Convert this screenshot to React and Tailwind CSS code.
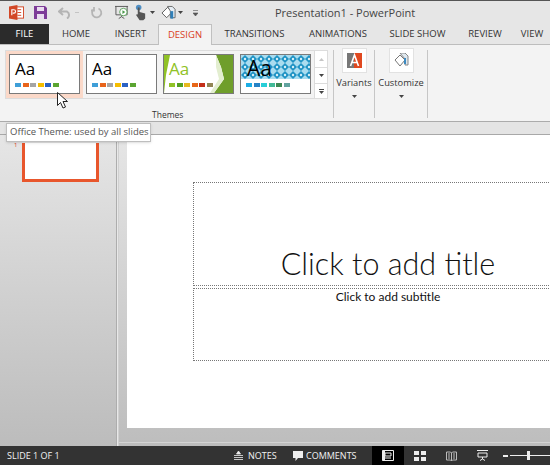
import { Fragment } from 'react';

const TABS = [
    { label: 'HOME', w: 'w-[54px]' },
    { label: 'INSERT', w: 'w-[55px]' },
    { label: 'DESIGN', w: 'w-[54px]', active: true },
    { label: 'TRANSITIONS', w: 'w-[85px]' },
    { label: 'ANIMATIONS', w: 'w-[82px]' },
    { label: 'SLIDE SHOW', w: 'w-[77px]' },
    { label: 'REVIEW', w: 'w-[58px]' },
    { label: 'VIEW', w: 'w-[36px]' },
];

const OFFICE = ['#3f9fd8', '#e8641b', '#a5a5a5', '#f5bd00', '#2b62c4', '#5ba532'];
const GREEN = ['#90c226', '#54a021', '#e6b91e', '#e76618', '#c42f1a', '#918655'];
const BLUE = ['#1cade4', '#2683c6', '#27ced7', '#42ba97', '#3e8853', '#62a39f'];

const Swatches = ({ colors }) => (
    <div className="flex gap-[1.5px]">
        {colors.map((c, i) => (
            <div key={i} className="w-[6px] h-[4px]" style={{ backgroundColor: c }} />
        ))}
    </div>
);

const Caret = ({ className }) => (
    <svg width="5" height="3" viewBox="0 0 5 3" className={className}>
        <path d="M0 0h5L2.500 3z" fill="#444" />
    </svg>
);

const ThemeCard = ({ colors, art, aa = 'left-[5px] top-[3px] text-[17px] text-black', selected }) => (
    <div className={`w-[77px] h-[47px] p-[3px] ${selected ? 'bg-[#fbd9c9]' : ''}`}>
        <div className="relative w-[71px] h-[40px] border border-[#7a7a7a] bg-white overflow-hidden">
            {art}
            <div className={`absolute leading-[22px] font-['Open_Sans',sans-serif] ${aa}`}>Aa</div>
            <div className="absolute left-[5px] top-[28px]">
                <Swatches colors={colors} />
            </div>
        </div>
    </div>
);

const GreenArt = () => (
    <svg width="69" height="38" viewBox="0 0 69 38" className="absolute left-0 top-0">
        <path d="M0 0h6L2 20 0 38z" fill="#90c226" />
        <path d="M52 0h17v38H50l10-14-3-12z" fill="#6f9e2b" />
        <path d="M52 0l5 12 3 12-10 14h-4l9-14-3-12z" fill="#e3eed0" />
    </svg>
);

const BlueArt = () => (
    <svg width="69" height="24" viewBox="0 0 69 24" className="absolute left-0 top-0">
        <defs>
            <pattern id="dots" width="8" height="8" patternUnits="userSpaceOnUse">
                <rect width="8" height="8" fill="#a9dcef" />
                <path d="M4 0L8 4 4 8 0 4z" fill="#1f93c4" />
                <circle cx="4" cy="4" r="1.200" fill="#d8f0f8" />
            </pattern>
        </defs>
        <rect width="69" height="24" fill="url(#dots)" />
    </svg>
);

const PowerPointLogo = () => (
    <svg width="15" height="15" viewBox="0 0 16 16">
        <rect x="7" y="2" width="8.500" height="12" fill="#fff" stroke="#d24726" />
        <path d="M9 5h4M9 8h4M9 11h4" stroke="#d24726" />
        <path d="M0 1.500L9 0v16L0 14.500z" fill="#d24726" />
        <path d="M3 11V5h2.200a1.700 1.700 0 010 3.600H4" fill="none" stroke="#fff" strokeWidth="1.200" />
    </svg>
);

const QuickAccess = () => (
    <div className="flex items-center h-full pl-[9px]">
        <PowerPointLogo />
        <svg width="13" height="13" viewBox="0 0 13 13" className="ml-[10px]">
            <path d="M0 0h11l2 2v11H0z" fill="#7d3c98" />
            <rect x="3" y="1" width="7" height="4" fill="#e9dcef" />
            <rect x="3" y="8" width="7" height="5" fill="#e9dcef" />
        </svg>
        <svg width="14" height="12" viewBox="0 0 14 12" className="ml-[11px]">
            <path d="M5 1L1 4.500 5 8M1 4.500h8a4 4 0 010 7" fill="none" stroke="#b4b4b4" strokeWidth="2" />
        </svg>
        <div className="ml-[3px] w-[4px] h-[1px] bg-[#c4c4c4]" />
        <svg width="12" height="12" viewBox="0 0 12 12" className="ml-[12px]">
            <path d="M7.500 1.500a4.600 4.600 0 11-4.500.5M3 0v3.500H0" fill="none" stroke="#b5b5b5" strokeWidth="1.800" />
        </svg>
        <svg width="14" height="15" viewBox="0 0 15 15" className="ml-[12px]">
            <path d="M0 1h14M1 1v9h12V1M7 10v2M4 14l3-2 3 2" fill="none" stroke="#555" />
            <circle cx="9" cy="7" r="4" fill="#fff" stroke="#5aa05a" />
            <path d="M8 5l3 2-3 2z" fill="#4a9a4a" />
        </svg>
        <svg width="12" height="17" viewBox="0 0 13 17" className="ml-[6px]">
            <circle cx="4" cy="3" r="3" fill="#4f8fc4" />
            <path d="M3 3h2v5l6 1.500V15l-2 2H5L1 11l2-.5z" fill="#555" />
        </svg>
        <Caret className="ml-[3px]" />
        <svg width="15" height="16" viewBox="0 0 16 16" className="ml-[6px]">
            <path d="M1 8l6-6 5 5-6 6z" fill="#fff" stroke="#555" />
            <path d="M7 1h5l3 3v9H10V6z" fill="#e6eef5" stroke="#666" />
            <rect x="10" y="6" width="3" height="8" fill="#2f7fb8" />
        </svg>
        <Caret className="ml-[2px]" />
        <svg width="5" height="6" viewBox="0 0 5 6" className="ml-[10px]">
            <path d="M0 .5h5M0 3h5L2.500 6z" fill="#555" stroke="#555" strokeWidth=".6" />
        </svg>
    </div>
);

const RibbonButton = ({ label, children, w }) => (
    <div className={`flex flex-col items-center ${w} text-[9.3px] leading-[14px] text-[#333]`}>
        <div className="w-[25px] h-[25px] mt-[3px] bg-white border border-[#e2e2e2] flex items-center justify-center">{children}</div>
        <div className="mt-[3px]">{label}</div>
        <Caret className="mt-[5px]" />
    </div>
);

const Separator = () => <div className="w-[1px] h-[68px] mt-[5px] bg-[#c6c6c6]" />;

const Ribbon = () => (
    <div className="h-[77px] bg-[#f3f3f3] border-b border-[#ababab] flex shrink-0">
        <div className="relative w-[333px] pl-[5px] pt-[5px]">
            <div className="flex border border-[#dcdcdc] w-[323px] h-[49px]">
                <ThemeCard selected colors={OFFICE} />
                <ThemeCard colors={OFFICE} />
                <ThemeCard colors={GREEN} art={<GreenArt />} aa="left-[5px] top-[3px] text-[17px] text-[#90c226]" />
                <ThemeCard colors={BLUE} art={<BlueArt />} aa="left-[6px] top-[2px] text-[21px] text-black" />
                <div className="ml-auto w-[13px] flex flex-col border-l border-[#dcdcdc] bg-white">
                    <div className="h-[17px] flex items-center justify-center border-b border-[#dcdcdc]">
                        <Caret className="rotate-180 opacity-30" />
                    </div>
                    <div className="h-[16px] flex items-center justify-center border-b border-[#dcdcdc]">
                        <Caret />
                    </div>
                    <div className="flex-1 flex flex-col gap-[1px] items-center justify-center">
                        <div className="w-[5px] h-[1px] bg-[#444]" />
                        <Caret />
                    </div>
                </div>
            </div>
            <div className="absolute left-[152px] top-[63px] text-[8.5px] leading-[14px] font-medium text-[#333]">Themes</div>
        </div>
        <Separator />
        <RibbonButton label="Variants" w="w-[40px]">
            <svg width="15" height="15" viewBox="0 0 15 15">
                <rect width="15" height="15" fill="#777" />
                <rect x="7" width="8" height="15" fill="#e0481f" />
                <path d="M3.500 13L7.500 2l4 11M5 9.500h5" fill="none" stroke="#fff" strokeWidth="1.600" />
            </svg>
        </RibbonButton>
        <Separator />
        <RibbonButton label="Customize" w="w-[52px]">
            <svg width="15" height="15" viewBox="0 0 15 15">
                <path d="M1 7l5-5 5 5-5 6z" fill="#fff" stroke="#777" />
                <path d="M6 0h5l3 3v9h-3V6z" fill="#dfe8ef" stroke="#888" />
                <rect x="10" y="5" width="2" height="6" fill="#3d8bc2" />
            </svg>
        </RibbonButton>
        <Separator />
    </div>
);

const StatusBar = () => (
    <div className="h-[19px] shrink-0 bg-[#333333] flex items-center text-[9px] text-[#f2f2f2] overflow-hidden [&>*]:shrink-0">
        <div className="ml-[7px] w-[227px]">SLIDE 1 OF 1</div>
        <svg width="9" height="9" viewBox="0 0 9 9">
            <path d="M2.500 3L4.500 0l2 3zM0 4.500h9M0 6.500h9M0 8.500h9" fill="#eee" stroke="#eee" strokeWidth=".8" />
        </svg>
        <div className="ml-[5px] w-[45px] text-[9px]">NOTES</div>
        <svg width="10" height="10" viewBox="0 0 10 10">
            <path d="M0 0h10v7H5L2.500 10V7H0z" fill="#eee" />
        </svg>
        <div className="ml-[3px] w-[66px] text-[9px]">COMMENTS</div>
        <div className="w-[32px] h-[19px] bg-black flex items-center justify-center">
            <svg width="12" height="11" viewBox="0 0 12 11">
                <path d="M.5.500h11v10H.500zM3 3h6v3H3zM3 8h6" fill="none" stroke="#eee" />
                <rect x=".5" y=".5" width="2.500" height="10" fill="#eee" />
            </svg>
        </div>
        <svg width="12" height="10" viewBox="0 0 12 10" className="ml-[10px]">
            <path d="M0 0h5v4H0zM7 0h5v4H7zM0 6h5v4H0zM7 6h5v4H7z" fill="#eee" />
        </svg>
        <svg width="11" height="10" viewBox="0 0 11 10" className="ml-[20px]">
            <path d="M.5 1h4l1 1 1-1h4v8h-4l-1 1-1-1h-4zM5.500 2v8M2 3h2M2 5h2M2 7h2M7 3h2M7 5h2M7 7h2" fill="none" stroke="#bbb" />
        </svg>
        <svg width="11" height="11" viewBox="0 0 11 11" className="ml-[20px]">
            <path d="M0 .5h11M1 3h9v4H1zM5.500 7v2M3 10.500l2.500-1.500L8 10.500" fill="none" stroke="#eee" />
        </svg>
        <div className="ml-[15px] w-[5px] h-[2px] bg-[#eee]" />
        <div className="relative ml-[2px] w-[45px] h-[1px] bg-[#eee]">
            <div className="absolute left-[17px] -top-[4px] w-[3px] h-[9px] bg-[#eee]" />
        </div>
    </div>
);

const App = () => {
    return (
        <div className="relative w-[550px] h-[465px] overflow-hidden flex flex-col bg-[#e8e8e8] font-['Open_Sans',sans-serif]">
            {/* title bar */}
            <div className="relative h-[24px] shrink-0 border-t border-[#555] bg-[#e6e6e6]">
                <QuickAccess />
                <div className="absolute left-[275px] top-[4px] text-[11px] leading-[16px] text-[#444]">Presentation1 - PowerPoint</div>
            </div>

            {/* tabs */}
            <div className="h-[21px] shrink-0 flex bg-[#e6e6e6] border-b border-[#bdbdbd] text-[9.5px] text-[#333]">
                <div className="w-[49px] bg-[#2b2b2b] text-white flex items-center justify-center">FILE</div>
                {TABS.map((tab) => (
                    <Fragment key={tab.label}>
                        {tab.active ? (
                            <div className={`${tab.w} h-[21px] z-10 bg-[#f3f3f3] border border-b-0 border-[#c0c0c0] text-[#d9401e] flex items-center justify-center`}>{tab.label}</div>
                        ) : (
                            <div className={`${tab.w} flex items-center justify-center`}>{tab.label}</div>
                        )}
                    </Fragment>
                ))}
            </div>

            <Ribbon />

            <div className="h-[13px] shrink-0 bg-[#e4e4e4] border-b border-[#a8a8a8]" />

            {/* main area */}
            <div className="flex-1 flex min-h-0">
                {/* thumbnails */}
                <div className="w-[117px] border-r border-[#adadad] bg-linear-to-b from-[#e6e6e6] to-[#bcbcbc] pl-[22px] pt-[8px]">
                    <div className="w-[77px] h-[39px] bg-white border-[3px] border-t-0 border-[#e8562c]" />
                </div>
                <div className="flex-1 ml-[1px] border-l border-[#d0d0d0] bg-linear-to-b from-[#e6e6e6] to-[#bdbdbd] pb-[3px] min-w-0 flex flex-col">
                    <div className="flex-1 min-h-0 border-b border-[#d4d4d4] pl-[8px] pb-[14px]">
                        <div className="h-full bg-white pl-[66px] pt-[47px] overflow-hidden">
                            <div className="w-[420px] h-[104px] border border-dotted border-[#777] pl-[1px] flex flex-col justify-end">
                                <div className="w-[386px] mb-[2px] text-center text-[30.500px] leading-[40px] text-[#111] font-['Lato',sans-serif] font-light">
                                    Click to add title
                                </div>
                            </div>
                            <div className="w-[420px] h-[73px] mt-[2px] border border-dotted border-[#777]">
                                <div className="w-[388px] text-center text-[12px] leading-[16px] text-[#111] font-['Lato',sans-serif]">
                                    Click to add subtitle
                                </div>
                            </div>
                        </div>
                    </div>
                </div>
            </div>

            <StatusBar />

            {/* tooltip and cursor lie over the ribbon */}
            <div className="absolute left-[6px] top-[123px] w-[145px] h-[19px] bg-white border border-[#bebebe] shadow-sm flex items-center pl-[3px] text-[9.5px] text-[#555] whitespace-nowrap">
                Office Theme: used by all slides
            </div>
            <svg width="12" height="17" viewBox="0 0 12 17" className="absolute left-[57px] top-[92px]">
                <path d="M.5.500v13l3-3 2.500 5.500 2.500-1-2.500-5.500h4.500z" fill="#fff" stroke="#222" />
            </svg>
            <div className="absolute left-[14px] top-[142px] text-[6px] leading-[6px] text-[#d9401e]">1</div>
        </div>
    );
};

export default App;
